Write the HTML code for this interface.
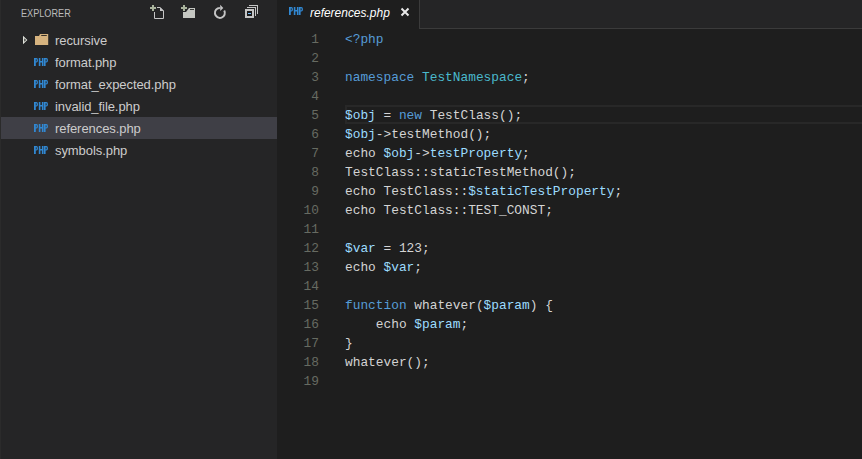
<!DOCTYPE html>
<html><head><meta charset="utf-8">
<style>
*{margin:0;padding:0;box-sizing:border-box}
html,body{width:862px;height:459px;overflow:hidden;background:#1e1e1e}
body{position:relative;font-family:"Liberation Sans",sans-serif}
#side{position:absolute;left:0;top:0;width:277px;height:459px;background:#252526}
#hdr{position:absolute;left:21px;top:7px;font-size:11px;color:#bbbbbb;white-space:nowrap;transform-origin:0 0;transform:scaleX(0.83);line-height:13px}
.ico{position:absolute}
.row{position:absolute;left:0;width:277px;height:22px;font-size:13px;color:#cccccc;line-height:22px}
.row .t{position:absolute;left:55px;top:1px;letter-spacing:-0.07px}
.row.sel{background:#3f3f46}
.php{position:absolute}
#tab{position:absolute;left:277px;top:0;width:142px;height:29px;background:#1e1e1e}
#tabrest{position:absolute;left:419px;top:0;width:443px;height:29px;background:#252526;border-left:1px solid #3b3b3b;border-bottom:1px solid #3b3b3b}
#tabname{position:absolute;left:33px;top:5px;font-size:13px;font-style:italic;color:#ffffff;line-height:16px;white-space:nowrap;transform-origin:0 0;transform:scaleX(0.92)}
#cur{position:absolute;left:345px;top:105px;width:517px;height:19px;border:2px solid #282828;border-right:none}
#nums{position:absolute;left:276px;top:30px;width:43px;font-family:"Liberation Mono",monospace;font-size:12.83px;line-height:19px;color:#676b62;text-align:right;white-space:pre}
#code{position:absolute;left:345px;top:30px;font-family:"Liberation Mono",monospace;font-size:12.83px;line-height:19px;color:#d4d4d4;white-space:pre}
.k{color:#569cd6}.v{color:#9cdcfe}.c{color:#4ab9cc}
</style></head><body>
<div id="side">
  <div style="position:absolute;left:0;top:0;width:1px;height:459px;background:#2b2b2b;z-index:2"></div>
  <div id="hdr">EXPLORER</div>
  <!-- new file -->
  <svg class="ico" style="left:146px;top:0px" width="22" height="22" viewBox="0 0 22 22" shape-rendering="crispEdges">
    <path d="M8.5 12 V18.5 H17.5 V11 L14 7.5 H11" fill="none" stroke="#c5c5c5" stroke-width="1" shape-rendering="geometricPrecision"/>
    <path d="M14 7 L18 11 H14 Z" fill="#c5c5c5" shape-rendering="geometricPrecision"/>
    <rect x="4" y="7" width="6" height="2" fill="#a9b39c"/>
    <rect x="6" y="5" width="2" height="6" fill="#a9b39c"/>
  </svg>
  <!-- new folder -->
  <svg class="ico" style="left:177px;top:0px" width="22" height="22" viewBox="0 0 22 22">
    <path d="M6 12 H9 L12 8 H18 V18 H6 Z" fill="#c5c7c2"/>
    <rect x="13" y="9" width="4" height="1" fill="#3a3b38"/>
    <rect x="4" y="7" width="6" height="2" fill="#a9b39c" shape-rendering="crispEdges"/>
    <rect x="6" y="5" width="2" height="6" fill="#a9b39c" shape-rendering="crispEdges"/>
  </svg>
  <!-- refresh -->
  <svg class="ico" style="left:210px;top:0px" width="22" height="22" viewBox="0 0 22 22">
    <path d="M9.9 7.9 A5 5 0 1 0 14.23 10.4" fill="none" stroke="#c5c5c5" stroke-width="2"/>
    <path d="M10.2 4.8 L13.3 8 L10.2 11.1 Z" fill="#c5c5c5"/>
  </svg>
  <!-- collapse -->
  <svg class="ico" style="left:240px;top:0px" width="22" height="22" viewBox="0 0 22 22" shape-rendering="crispEdges">
    <rect x="9" y="5" width="9" height="1" fill="#c5c5c5"/>
    <rect x="17" y="5" width="1" height="9" fill="#c5c5c5"/>
    <rect x="7" y="7" width="9" height="1" fill="#c5c5c5"/>
    <rect x="15" y="7" width="1" height="9" fill="#c5c5c5"/>
    <rect x="5" y="9" width="9" height="9" fill="#c5c5c5"/>
    <rect x="7" y="11" width="5" height="5" fill="#1a1a1a"/>
    <rect x="8" y="13" width="3" height="1" fill="#75beff"/>
  </svg>
  <div class="row" style="top:29px">
    <svg class="ico" style="left:22px;top:6px" width="7" height="10" viewBox="0 0 7 10"><path d="M1 0.8 L5.4 5 L1 9.2 Z M2.3 3.2 L4 5 L2.3 6.8 Z" fill="#dfe2da" fill-rule="evenodd"/></svg>
    <svg class="ico" style="left:34px;top:4px" width="15" height="13" viewBox="0 0 15 13"><path d="M1 3 H5 L6 1 H14.2 V12 H1 Z" fill="#d6b37f"/><rect x="7.2" y="2" width="5.6" height="1" fill="#3a3228"/></svg>
    <span class="t">recursive</span>
  </div>
  <div class="row" style="top:51px"><svg class="php" style="left:34px;top:7px" width="14" height="8"><use href="#phpi"/></svg><span class="t">format.php</span></div>
  <div class="row" style="top:73px"><svg class="php" style="left:34px;top:7px" width="14" height="8"><use href="#phpi"/></svg><span class="t">format_expected.php</span></div>
  <div class="row" style="top:95px"><svg class="php" style="left:34px;top:7px" width="14" height="8"><use href="#phpi"/></svg><span class="t">invalid_file.php</span></div>
  <div class="row sel" style="top:117px"><svg class="php" style="left:34px;top:7px" width="14" height="8"><use href="#phpi"/></svg><span class="t">references.php</span></div>
  <div class="row" style="top:139px"><svg class="php" style="left:34px;top:7px" width="14" height="8"><use href="#phpi"/></svg><span class="t">symbols.php</span></div>
</div>
<svg width="0" height="0" style="position:absolute">
  <defs>
    <g id="phpi" fill="#3188d2" fill-rule="evenodd">
      <path d="M0 0 H2.4 Q4 0 4 2.2 Q4 4.6 2.4 4.6 H1.8 V8 H0 Z M1.8 1.2 V3.4 H2.2 Q2.7 3.4 2.7 2.3 Q2.7 1.2 2.2 1.2 Z"/>
      <path d="M4.8 0 H6.4 V3.1 H7.9 V0 H9.5 V8 H7.9 V4.5 H6.4 V8 H4.8 Z"/>
      <path d="M9.9 0 H12.3 Q14 0 14 2.2 Q14 4.6 12.3 4.6 H11.6 V8 H9.9 Z M11.6 1.2 V3.4 H12.1 Q12.7 3.4 12.7 2.3 Q12.7 1.2 12.1 1.2 Z"/>
    </g>
  </defs>
</svg>
<div id="tab">
  <svg class="php" style="left:12px;top:7px" width="14" height="8"><use href="#phpi"/></svg>
  <div id="tabname">references.php</div>
  <svg class="ico" style="left:123px;top:7px" width="10" height="10" viewBox="0 0 10 10"><path d="M1.5 1.5 L8.5 8.5 M8.5 1.5 L1.5 8.5" stroke="#e8e8e8" stroke-width="2"/></svg>
</div>
<div id="tabrest"></div>
<div id="cur"></div>
<div id="nums">1
2
3
4
5
6
7
8
9
10
11
12
13
14
15
16
17
18
19</div>
<div id="code"><span class="k">&lt;?php</span>

<span class="k">namespace</span> <span class="c">TestNamespace</span>;

<span class="v">$obj</span> = <span class="k">new</span> TestClass();
<span class="v">$obj</span>-&gt;testMethod();
echo <span class="v">$obj</span>-&gt;<span class="v">testProperty</span>;
TestClass::staticTestMethod();
echo TestClass::<span class="v">$staticTestProperty</span>;
echo TestClass::TEST_CONST;

<span class="v">$var</span> = 123;
echo <span class="v">$var</span>;

<span class="k">function</span> whatever(<span class="v">$param</span>) {
    echo <span class="v">$param</span>;
}
whatever();
</div>
</body></html>
